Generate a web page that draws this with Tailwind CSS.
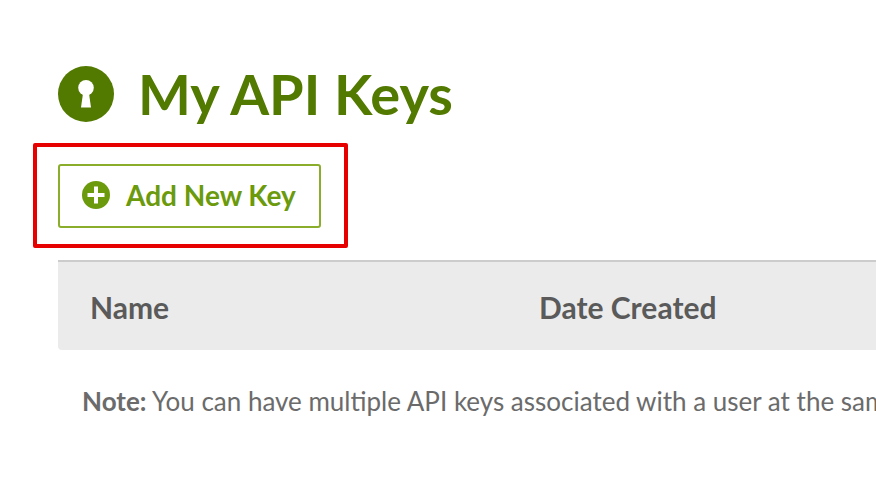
<!DOCTYPE html>
<html lang="en">
<head>
    <meta charset="UTF-8">
    <title>My API Keys</title>
    <script src="https://cdn.jsdelivr.net/npm/@tailwindcss/browser@4"></script>
</head>
<body class="h-[482px] w-[876px] overflow-hidden bg-white font-['Lato',sans-serif]">
    <div class="relative pl-[58px] pt-[66px]">
        <!-- Heading -->
        <div class="flex h-[56px] items-center gap-[24px]">
            <svg class="h-[56px] w-[56px] shrink-0" viewBox="0 0 56 56">
                <circle cx="28" cy="28" r="28" fill="#527900"/>
                <circle cx="28" cy="21.8" r="7.8" fill="#fff"/>
                <path d="M25.2 26h5.6L33 41.5H23z" fill="#fff"/>
            </svg>
            <h1 class="whitespace-nowrap text-[56px] font-bold leading-none text-[#527900]">My API Keys</h1>
        </div>

        <!-- Add button -->
        <button class="mt-[42px] flex h-[64px] w-[263px] items-center gap-[16px] rounded-[3px] border-2 border-[#8aae2b] pb-[2px] pl-[22px] text-[28px] font-bold text-[#6b9a0c]">
            <svg class="h-[28px] w-[28px] shrink-0" viewBox="0 0 28 28">
                <circle cx="14" cy="14" r="14" fill="#6b9a0c"/>
                <path d="M14 5.5v17M5.5 14h17" stroke="#fff" stroke-width="4"/>
            </svg>
            <span class="whitespace-nowrap">Add New Key</span>
        </button>

        <!-- Highlight box -->
        <div class="absolute left-[33px] top-[143px] h-[105px] w-[315px] rounded-[2px] border-4 border-[#e60000]"></div>

        <!-- Table header -->
        <div class="mt-[32px] flex h-[90px] w-[818px] items-center rounded-bl-[4px] border-t-2 border-[#cccccc] bg-[#ebebeb] pl-[32px] pt-[2px] text-[30px] font-bold text-[#5a5a5a]">
            <div class="w-[449px]">Name</div>
            <div class="whitespace-nowrap">Date Created</div>
        </div>

        <!-- Note -->
        <p class="ml-[24px] mt-[36px] whitespace-nowrap text-[26px] leading-[30px] text-[#6b6b6b]"><strong class="font-bold">Note:</strong> You can have multiple API keys associated with a user at the same time.</p>
    </div>
</body>
</html>
